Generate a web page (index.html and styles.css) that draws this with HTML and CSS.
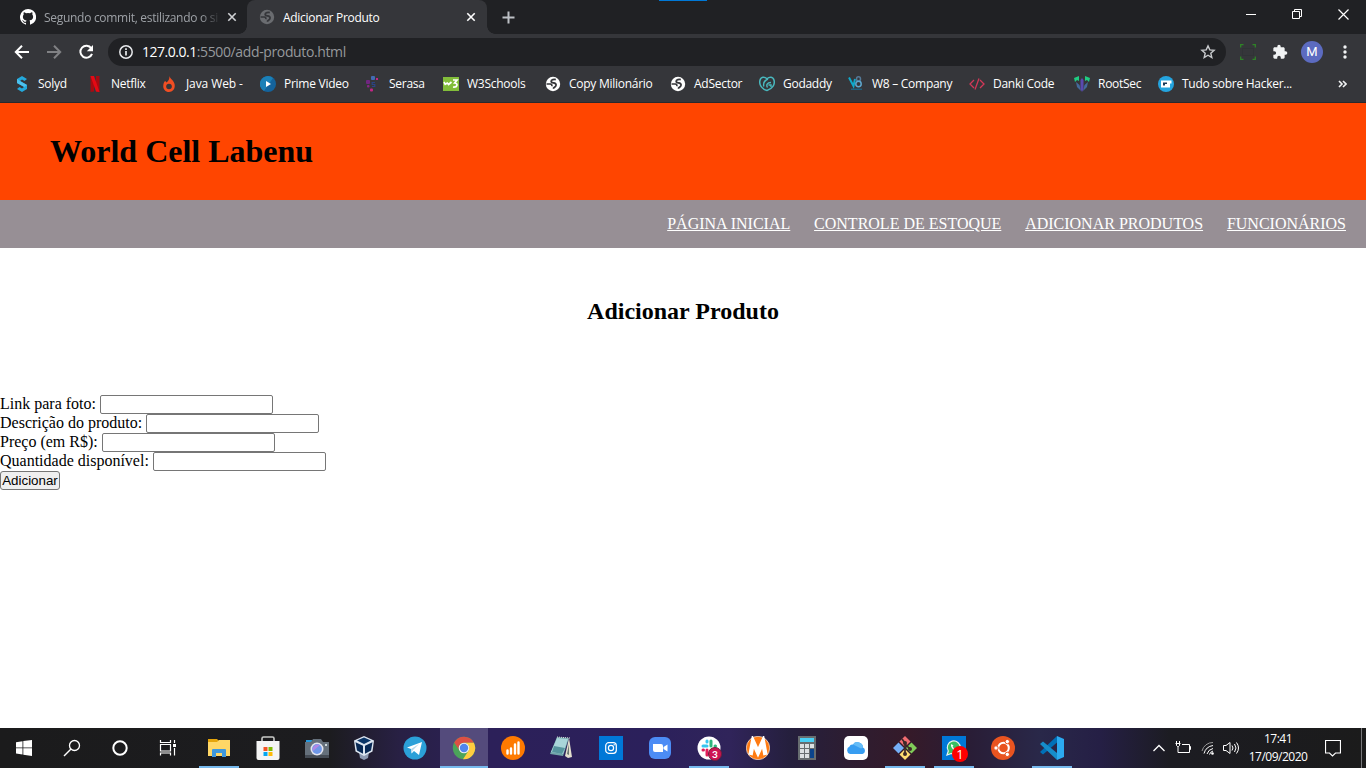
FILE: index.html
```html
<!DOCTYPE html>
<html lang="pt-BR">
<head>
<meta charset="utf-8">
<title>Adicionar Produto</title>
<link rel="stylesheet" href="styles.css">
</head>
<body>
<svg class="defs" width="0" height="0">
  <symbol id="globe" viewBox="0 0 16 16"><circle cx="8" cy="8" r="7.2" fill="currentColor" stroke="none"/><path d="M10.800 3.600C9 3 6.200 3.600 6.200 5.300c0 1.600 1.500 1.500 2.800 1.700 1.700.3 2.500 1.400 1.800 2.900-.6 1.200-1.800 1.400-2.600 2.700" fill="none" stroke-width="1.800"/><path d="M1.500 8h3.800c1.300.2 1.900 1 1.500 2.200" fill="none" stroke-width="1.600"/></symbol>
  <symbol id="x" viewBox="0 0 10 10"><path d="M1.300 1.300l7.400 7.400M8.700 1.300L1.300 8.700" fill="none" stroke="currentColor" stroke-width="1.600"/></symbol>
</svg>
<div class="browser">
  <div class="tabs">
    <div class="tab tab-github">
      <svg width="16" height="16" viewBox="0 0 16 16"><path fill="#fff" d="M8 0a8 8 0 0 0-2.530 15.590c.4.070.550-.170.550-.380v-1.340c-2.230.480-2.700-1.070-2.700-1.070-.360-.930-.890-1.170-.890-1.170-.730-.5.060-.490.060-.490.800.060 1.230.830 1.230.830.710 1.220 1.870.870 2.330.660.070-.520.280-.870.500-1.070-1.770-.2-3.640-.890-3.640-3.950 0-.880.310-1.590.820-2.150-.080-.2-.360-1.020.080-2.120 0 0 .670-.220 2.200.820a7.500 7.500 0 0 1 4 0c1.530-1.040 2.200-.820 2.200-.820.440 1.100.160 1.920.080 2.120.510.560.820 1.270.820 2.150 0 3.070-1.870 3.750-3.650 3.950.290.250.540.730.540 1.480v2.200c0 .210.150.460.550.380A8 8 0 0 0 8 0z"/></svg>
      <span class="tab-title faded">Segundo commit, estilizando o si</span>
      <svg class="tab-x" width="10" height="10"><use href="#x"/></svg>
    </div>
    <div class="tab tab-active">
      <svg class="globe-dim" width="16" height="16"><use href="#globe"/></svg>
      <span class="tab-title">Adicionar Produto</span>
      <svg class="tab-x" width="10" height="10"><use href="#x"/></svg>
    </div>
    <svg class="plus" width="13" height="13" viewBox="0 0 13 13"><path d="M6.500.5v12M.5 6.500h12" stroke="#bdc1c6" stroke-width="2"/></svg>
    <i class="accent"></i>
    <div class="win-buttons">
      <svg width="11" height="11"><path d="M0 5.500h10" stroke="#fff"/></svg>
      <svg width="11" height="11"><path d="M.5 2.500h7v7h-7zM2.500 2V.5h7v7H8" fill="none" stroke="#fff"/></svg>
      <svg width="11" height="11"><path d="M.5.5l10 10M10.500.5l-10 10" stroke="#fff" stroke-width="1.200"/></svg>
    </div>
  </div>
  <div class="toolbar">
    <svg width="16" height="16" viewBox="0 0 16 16"><path d="M15 8H2M8 1.800L1.800 8 8 14.200" fill="none" stroke="#fff" stroke-width="2"/></svg>
    <svg width="16" height="16" viewBox="0 0 16 16"><path d="M1 8h13M8 1.800L14.200 8 8 14.200" fill="none" stroke="#808184" stroke-width="2"/></svg>
    <svg width="16" height="16" viewBox="0 0 16 16"><path d="M13.300 4.300A6 6 0 1 0 14 9.800" fill="none" stroke="#fff" stroke-width="2"/><path d="M15 1v6.200H8.800z" fill="#fff"/></svg>
    <div class="omnibox">
      <svg width="16" height="16" viewBox="0 0 16 16"><circle cx="8" cy="8" r="6.200" fill="none" stroke="#e8eaed" stroke-width="1.500"/><path d="M8 7v4.500M8 4.300v1.600" stroke="#e8eaed" stroke-width="1.700"/></svg>
      <span class="url"><b>127.0.0.1</b>:5500/add-produto.html</span>
      <svg class="star" width="16" height="16" viewBox="0 0 16 16"><path d="M8 1.900l1.800 4 4.300.4-3.300 2.900 1 4.300L8 11.200l-3.800 2.300 1-4.300-3.300-2.900 4.300-.4z" fill="none" stroke="#c8cacd" stroke-width="1.400"/></svg>
    </div>
    <svg class="frame" width="16" height="16" viewBox="0 0 16 16"><path d="M.7 3.500V.7h2.800M12.500.7h2.800v2.800M15.300 12.500v2.800h-2.800M3.500 15.300H.7v-2.800" fill="none" stroke="#2f8427" stroke-width="1.300"/><rect x="2.500" y="4.500" width="11" height="7" fill="none" stroke="#303336"/></svg>
    <svg class="puzzle" width="16" height="16" viewBox="0 0 24 24"><path fill="#f1f3f4" d="M20.500 11H19V7c0-1.100-.9-2-2-2h-4V3.500a2.500 2.500 0 0 0-5 0V5H4c-1.100 0-2 .9-2 2v3.800h1.500a2.700 2.700 0 0 1 0 5.400H2V20c0 1.100.9 2 2 2h3.800v-1.500a2.700 2.700 0 0 1 5.400 0V22H17c1.100 0 2-.9 2-2v-4h1.500a2.500 2.500 0 0 0 0-5z"/></svg>
    <span class="avatar">M</span>
    <svg class="dots" width="4" height="14"><circle cx="2" cy="2" r="1.700"/><circle cx="2" cy="7" r="1.700"/><circle cx="2" cy="12" r="1.700"/></svg>
  </div>
  <div class="bookmarks">
    <span class="bm"><svg viewBox="0 0 16 16"><path d="M8 0l5 3-2.500 2L8 3.500 6 5l7 4v4l-5 3-5-3 2.500-2L8 12.500l2-1.500-7-4V3z" fill="#24a9dc"/><path d="M3 3l3 2 7 4-2.500 2L3 7z" fill="#4cc1ee"/></svg>Solyd</span>
    <span class="bm"><svg viewBox="0 0 16 16"><path d="M3.500 0H7v15.500l-3.500.5zM9 0h3.500v16L9 15.500z" fill="#a60b12"/><path d="M3.500 0H7l5.500 16L9 15.500z" fill="#e50914"/></svg>Netflix</span>
    <span class="bm java"><svg viewBox="0 0 16 16"><path d="M8.500 0c.4 3 4.700 4.400 5.200 8.800C14.200 13 11.500 16 8 16s-6.200-3-5.700-6.800c.2-2 1-3.700 2-4.200l1.100 1.500C7.700 4.800 8.500 3 8.500 0z" fill="#f04e23"/><circle cx="8" cy="10.500" r="2.800" fill="#35363a"/></svg>Java Web -</span>
    <span class="bm"><svg viewBox="0 0 16 16"><circle cx="8" cy="8" r="8" fill="#14639c"/><path d="M1 4a8 8 0 0 1 12-2L4 15A8 8 0 0 1 1 4z" fill="#1b80b7"/><path d="M6 5l5 3-5 3z" fill="#fff"/></svg>Prime Video</span>
    <span class="bm"><svg viewBox="0 0 16 16"><rect x="6" y="0" width="4" height="4" rx="1" fill="#426cb4"/><rect x="1" y="4" width="4" height="4" rx="1" fill="#702681"/><rect x="2" y="9" width="2.500" height="2.500" rx="1" fill="#8b2687"/><rect x="5" y="12.500" width="3" height="3" rx="1" fill="#c42686"/><rect x="11" y="2" width="2" height="2" fill="#c42686"/><path d="M10 6.500H7.200v2h2.600v2H7" fill="none" stroke="#2b4484" stroke-width="1.200"/></svg>Serasa</span>
    <span class="bm"><svg viewBox="0 0 16 16"><rect y="1" width="16" height="14" fill="#82bd3a"/><path d="M1 6l1.200 2.300L4.300 7l1.300 1.500L8.500 6M10 4h4l-2.300 3c3.500 0 3 4.500-1.700 4" fill="none" stroke="#fff" stroke-width="1.700"/></svg>W3Schools</span>
    <span class="bm globe-light"><svg><use href="#globe"/></svg>Copy Milionário</span>
    <span class="bm globe-light"><svg><use href="#globe"/></svg>AdSector</span>
    <span class="bm"><svg viewBox="0 0 16 16"><path d="M8 14.500C2.500 13 0 8.500.9 4.500 1.800.6 5.500.5 8 2.800c2.500-2.300 6.200-2.200 7.100 1.700.9 4-1.600 8.500-7.100 10z" fill="none" stroke="#49b8be" stroke-width="1.500"/><path d="M4.800 10.500C4 7 5.500 4.500 9 3M8.500 11.500C7 9 8 6.500 12 6.500M9.500 9H12v2" fill="none" stroke="#49b8be" stroke-width="1.400"/></svg>Godaddy</span>
    <span class="bm"><svg viewBox="0 0 16 16"><path d="M1 1.500l4.500 8.500L7 3" fill="none" stroke="#10a8c9" stroke-width="2"/><ellipse cx="10.500" cy="3" rx="2" ry="2.200" fill="none" stroke="#557a98" stroke-width="1.500"/><circle cx="10.500" cy="8" r="2.700" fill="none" stroke="#5ea8cf" stroke-width="1.500"/><path d="M3 12.500h11v1.500H3z" fill="#205f7b"/></svg>W8 – Company</span>
    <span class="bm"><svg viewBox="0 0 16 16"><path d="M5 4L1 8l4 4M11 4l4 4-4 4M10 2.500L6 13.500" fill="none" stroke="#d23858" stroke-width="1.300"/></svg>Danki Code</span>
    <span class="bm"><svg viewBox="0 0 16 16"><path d="M0 2l5-2v5L3 4 1 6zM16 2l-5-2v5l2-1 2 2z" fill="#20cc82"/><path d="M2 6l3.500 3 1.500 6-4-4zM14 6l-3.500 3L9 15l4-4z" fill="#446a9b"/><path d="M8 2l1.500 2v9L8 16l-1.500-3V4z" fill="#5a49b0"/></svg>RootSec</span>
    <span class="bm"><svg viewBox="0 0 16 16"><circle cx="8" cy="8" r="8" fill="#24a4df"/><path d="M3 4.500h10.500v3H12v4H3z" fill="#fff"/><path d="M5 6.500h4V8H7v1.500H5z" fill="#183858"/></svg>Tudo sobre Hacker...</span>
    <svg class="more" width="9" height="8"><path d="M1 1l3 3-3 3M5 1l3 3-3 3" fill="none" stroke="#f1f3f4" stroke-width="1.600"/></svg>
  </div>
</div>

<div class="page">
  <header><h1>World Cell Labenu</h1></header>
  <nav>
    <a href="#">PÁGINA INICIAL</a>
    <a href="#">CONTROLE DE ESTOQUE</a>
    <a href="#">ADICIONAR PRODUTOS</a>
    <a href="#">FUNCIONÁRIOS</a>
  </nav>
  <h2>Adicionar Produto</h2>
  <form>
    <label>Link para foto: <input type="text"></label>
    <label>Descrição do produto: <input type="text"></label>
    <label>Preço (em R$): <input type="text"></label>
    <label>Quantidade disponível: <input type="text"></label>
    <button type="button">Adicionar</button>
  </form>
</div>

<div class="taskbar">
  <div class="system">
    <span><svg viewBox="0 0 24 24"><path d="M4 6.200l6.500-1v6.300H4zM11.300 5l8.700-1v7.500h-8.700zM4 12.300h6.500v6.300l-6.500-1zM11.300 12.300H20V20l-8.700-1.200z" fill="#fff"/></svg></span>
    <span><svg viewBox="0 0 24 24"><circle cx="14.500" cy="9.500" r="5" fill="none" stroke="#fff" stroke-width="1.300"/><path d="M11 13l-7 7" stroke="#fff" stroke-width="1.500"/></svg></span>
    <span><svg viewBox="0 0 24 24"><circle cx="12" cy="12" r="6.700" fill="none" stroke="#fff" stroke-width="2"/></svg></span>
    <span><svg viewBox="0 0 24 24"><path d="M4.500 4v2.500h10V4M4.500 19.500V17h10v2.500M4.500 8.500h10v6.500h-10zM18.500 4v3M18.500 12v7.500" fill="none" stroke="#fff" stroke-width="1.200"/><path d="M17 8h3v3h-3z" fill="#fff"/></svg></span>
  </div>
  <div class="apps">
    <span class="open"><svg viewBox="0 0 24 24"><path d="M1 3h9l2 2h11v15H1z" fill="#e5a50b"/><path d="M1 6h9l2-2h11v16H1z" fill="#ffd766"/><path d="M5 14q0-1 1-1h12q1 0 1 1v7h-4v-4H9v4H5z" fill="#3f98dc"/></svg></span>
    <span><svg viewBox="0 0 24 24"><path d="M6 6V2.500Q6 1 7.500 1h9Q18 1 18 2.500V6" fill="none" stroke="#c9cac9" stroke-width="1.600"/><path d="M.5 5h23v17q0 2-2 2h-19q-2 0-2-2z" fill="#f5f5f5"/><path d="M7.500 11h4v4h-4z" fill="#f35325"/><path d="M12.500 11h4v4h-4z" fill="#81bc06"/><path d="M7.500 16h4v4h-4z" fill="#05a6f0"/><path d="M12.500 16h4v4h-4z" fill="#ffba08"/></svg></span>
    <span><svg viewBox="0 0 24 24"><path d="M1 4h6v4H1z" fill="#2497dc"/><path d="M0 6h6l2-3h8l2 3h6v16H0z" fill="#65707b"/><path d="M0 19h24v3H0z" fill="#454c55"/><circle cx="12" cy="13" r="6.500" fill="#e4e5ee"/><circle cx="12" cy="13" r="4.900" fill="#6f98e7"/><path d="M8 15a5 5 0 0 1 7-6z" fill="#b387e5"/><rect x="20" y="8" width="2" height="2" fill="#cdd8dc"/></svg></span>
    <span class="vbox"><svg viewBox="0 0 24 24"><path d="M7 16l1 6 4 2 4-2 1-6z" fill="#8e9bb3"/><path d="M2 4.500L12 0l10 4.500-1.500 11L12 20l-8.500-4.500z" fill="#dce5f0"/><path d="M3.500 6.200l7.500 3.500v8L5 14.500zM20.500 6.200L13 9.700v8l6-3.200z" fill="#082955"/><path d="M5 4.500L12 1.500l7 3-7 3.500z" fill="#0a3567"/></svg></span>
    <span><svg viewBox="0 0 24 24"><circle cx="12" cy="12" r="11.500" fill="#2ba0d8"/><path d="M4 11.500L19 6l-3 13-5-4-2.500 2.500L8 13z" fill="#fff"/><path d="M8 13l8-5-6 6-1.500 3z" fill="#b7d8ea"/></svg></span>
    <span class="open active"><svg viewBox="0 0 24 24"><circle cx="12" cy="12" r="11.200" fill="#4ba45a"/><path d="M2.200 6.500A11.200 11.200 0 0 1 21.800 6.700H12a5.300 5.300 0 0 0-4.800 7.600z" fill="#dd5044"/><path d="M12 6.700h9.800A11.200 11.200 0 0 1 11 23.200l5.500-8.500A5.300 5.300 0 0 0 12 6.700z" fill="#ffcd40"/><circle cx="12" cy="12" r="5.300" fill="#f1f1f1"/><circle cx="12" cy="12" r="4.200" fill="#5086ec"/></svg></span>
    <span><svg viewBox="0 0 24 24"><circle cx="12" cy="12" r="12" fill="#ff7a00"/><path d="M6.500 14.500v3M10 12.500v5M14 8.500v9M17.500 6.500v11" stroke="#fff" stroke-width="2.400" stroke-linecap="round"/></svg></span>
    <span class="notepad"><svg viewBox="0 0 24 24"><path d="M8 1l12 1-6 18-13-2z" fill="#72a4a9"/><path d="M8 2l11 1-5 15-12-2z" fill="#a9d5d9"/><path d="M5 10l11 2-3 6-10-2z" fill="#57959e"/><path d="M20 2l3 19-4 1-3-2z" fill="#e3dfce"/><path d="M20 8l-2 10 2 1z" fill="#697570"/><path d="M8 1l13 1" stroke="#ddd" stroke-dasharray="1 1"/></svg></span>
    <span><svg viewBox="0 0 24 24"><path d="M0 0h24v24H0z" fill="#0078d7"/><rect x="6.700" y="6.700" width="10.600" height="10.600" rx="3" fill="none" stroke="#fff" stroke-width="1.200"/><circle cx="12" cy="12" r="2.600" fill="none" stroke="#fff" stroke-width="1.200"/><circle cx="15.200" cy="8.800" r=".7" fill="#fff"/></svg></span>
    <span><svg viewBox="0 0 24 24"><rect x="1" y="1" width="22" height="22" rx="6" fill="#4c8cf5"/><path d="M5 8h8q2 0 2 2v6H7q-2 0-2-2zM15.500 11l4-2.500v7l-4-2.500z" fill="#fff"/></svg></span>
    <span class="open"><svg viewBox="0 0 24 24"><circle cx="12" cy="12" r="11.500" fill="#fff"/><g fill="none" stroke-width="3" stroke-linecap="round"><path d="M6 10h4M10 5v1" stroke="#36c5f0"/><path d="M14 5v5M18 10h.5" stroke="#2eb67d"/><path d="M10 14v5M6 14h.5" stroke="#e01e5a"/><path d="M14 14h4" stroke="#ecb22e"/></g></svg><em class="slack-badge">3</em></span>
    <span><svg viewBox="0 0 24 24"><circle cx="12" cy="12" r="11.700" fill="#ff7b12" stroke="#fff" stroke-width=".6"/><path d="M4.500 19L7 5.500l5 11 5-11L19.500 19" fill="none" stroke="#fff" stroke-width="4.400"/></svg></span>
    <span><svg viewBox="0 0 24 24"><path d="M3 0h18v24H3z" fill="#676d70"/><path d="M5 2h14v4H5z" fill="#49cff5"/><path d="M5 8h4v4H5zM10 8h4v4h-4zM15 8h4v4h-4zM5 13h4v4H5zM10 13h4v4h-4zM5 18h4v4H5zM10 18h4v4h-4z" fill="#dbe0e2"/><path d="M15 13h4v9h-4z" fill="#0b448c"/></svg></span>
    <span><svg viewBox="0 0 24 24"><rect width="24" height="24" rx="5" fill="#fff"/><path d="M6 18a4 4 0 0 1-.5-7.500 3 3 0 0 1 3.500-2 5.500 5.500 0 0 1 10 3A3.500 3.500 0 0 1 18.500 18z" fill="#379df1"/><path d="M9 8.500a5.500 5.500 0 0 1 10 3l-2 1z" fill="#65bcf7"/></svg></span>
    <span class="open"><svg viewBox="0 0 24 24"><path d="M12 0l5.500 5.500L12 11 6.500 5.500z" fill="#f16c70"/><path d="M5.500 6.500L11 12l-5.500 5.500L0 12z" fill="#75aff7"/><path d="M18.500 6.500L24 12l-5.500 5.500L13 12z" fill="#80cc59"/><path d="M12 13l5.500 5.500L12 24l-5.500-5.500z" fill="#ffdd70"/><path d="M9 3l3 4v11M12 8l5 5" fill="none" stroke="#3d2927" stroke-width="1.700"/><g fill="#3d2927"><circle cx="12" cy="7" r="2"/><circle cx="17" cy="13" r="2"/><circle cx="12" cy="18" r="2"/></g></svg></span>
    <span class="open"><svg viewBox="0 0 24 24"><path d="M0 0h24v24H0z" fill="#0078d7"/><path d="M5 19l1.300-4a6.500 6.500 0 1 1 3 2.500z" fill="#38bf62" stroke="#e8f5ec" stroke-width="1.200"/><path d="M9.500 8c-2 2 2 7 5 7l1-2-2-1-1 .7-2-2 1-1z" fill="#fff"/></svg><em class="wa-badge">1</em></span>
    <span><svg viewBox="0 0 24 24"><circle cx="12" cy="12" r="12" fill="#e95420"/><circle cx="12.500" cy="12" r="5.300" fill="none" stroke="#fff" stroke-width="2"/><g fill="#fff" stroke="#e95420"><circle cx="5" cy="12" r="2.200"/><circle cx="16.300" cy="5.600" r="2.200"/><circle cx="16.300" cy="18.400" r="2.200"/></g></svg></span>
    <span class="open"><svg viewBox="0 0 24 24"><path d="M17 0v6.500L3 18.500 0 16z" fill="#0070b8"/><path d="M0 8l3-2.500L17 17v7z" fill="#168dcb"/><path d="M17 0l7 3v18l-7 3z" fill="#2caaf0"/></svg></span>
  </div>
  <div class="tray">
    <svg class="chevron" width="14" height="24"><path d="M1.500 15L7 9.500l5.500 5.500" fill="none" stroke="#fff" stroke-width="1.300"/></svg>
    <svg class="battery" width="16" height="24"><path d="M7 8.500h7.500v8H4M14.500 10.500h1v3h-1M1.500 5v2M4.500 5v2M.5 7.500h5M1.500 7.500v2l1 1h1l1-1v-2M3 10.500v6h2" fill="none" stroke="#fff"/></svg>
    <svg class="wifi" width="14" height="24"><g fill="none"><path d="M1 15A11 11 0 0 1 12 6.500" stroke="#999"/><path d="M3 17.500A11 11 0 0 1 12 9.500M6 18A8 8 0 0 1 12 12.500M8.500 18.500a5 5 0 0 1 3.500-3.500" stroke="#fff"/></g><circle cx="11.500" cy="17.500" r="1.300" fill="#fff"/></svg>
    <svg class="volume" width="17" height="24"><path d="M.5 9.500h2.500L7 6.500v11L3 14.500H.5zM9 9.500q2 2.500 0 5M11.500 8q3 4 0 8M13.500 6.500q4 5.500 0 11" fill="none" stroke="#fff"/></svg>
    <div class="clock"><span>17:41</span><span>17/09/2020</span></div>
    <svg width="16" height="24"><path d="M.5 4.500h15v12.500h-5l-3 3-3-3h-4z" fill="none" stroke="#fff" stroke-width="1.200"/></svg>
    <i class="desktop-edge"></i>
  </div>
</div>
</body>
</html>
```
FILE: styles.css
```css
* { box-sizing: border-box; }
body { margin: 0; width: 1366px; height: 768px; overflow: hidden; display: flex; flex-direction: column; background: #fff; font-family: "Liberation Serif", serif; }
svg { display: block; flex: none; }
.defs { position: absolute; }

.browser { height: 103px; flex: none; background: #35363a; border-bottom: 1px solid #29292c; font-family: "Open Sans", "Noto Sans", sans-serif; color: #fff; }
.tabs { height: 34px; display: flex; align-items: center; background: #202124; position: relative; }
.tab { display: flex; align-items: center; height: 34px; font-size: 12px; }
.tab-github { width: 247px; padding: 0 10px 0 20px; color: #9da1a6; }
.tab-active { width: 240px; padding: 0 11px 0 12px; background: #35363a; border-radius: 8px 8px 0 0; color: #fff; position: relative; }
.tab-active::before, .tab-active::after { content: ""; position: absolute; bottom: 0; width: 8px; height: 8px; }
.tab-active::before { left: -8px; background: radial-gradient(circle at 0 0, #202124 7.5px, #35363a 8px); }
.tab-active::after { right: -8px; background: radial-gradient(circle at 100% 0, #202124 7.5px, #35363a 8px); }
.tab-title { margin-left: 8px; letter-spacing: -.3px; white-space: nowrap; }
.faded { letter-spacing: -.29px; -webkit-mask-image: linear-gradient(90deg, #000 90%, rgba(0,0,0,.15)); mask-image: linear-gradient(90deg, #000 90%, rgba(0,0,0,.15)); }
.tab-x { margin-left: auto; color: #d0d2d5; }
.tab-active .tab-x { color: #fff; }
.globe-dim { color: #6a6c70; stroke: #35363a; }
.plus { margin-left: 15px; }
.accent { position: absolute; left: 659px; top: 0; width: 48px; height: 1px; background: #0078d7; }
.win-buttons { margin-left: auto; display: flex; gap: 35px; padding: 0 17px 6px 0; }

.toolbar { height: 36px; display: flex; align-items: center; padding-left: 14px; }
.toolbar > svg + svg { margin-left: 16px; }
.omnibox { width: 1118px; height: 28px; margin-left: 14px; border-radius: 14px; background: #202124; display: flex; align-items: center; padding: 0 10px; }
.url { margin-left: 8px; font-size: 14px; line-height: 18px; padding-bottom: 1px; color: #96999c; letter-spacing: -.37px; }
.url b { font-weight: 400; color: #fff; letter-spacing: -.48px; }
.star { margin-left: auto; }
.frame { margin-left: 14px; }
.avatar { width: 22px; height: 22px; margin-left: 13px; border-radius: 50%; background: #5c6bc0; font: 13px/22px Roboto, sans-serif; text-align: center; }
.dots { margin-left: 20px; fill: #f1f3f4; }

.bookmarks { height: 27px; display: grid; grid-template-columns: 73px 74px 99px 105px 78px 102px 125px 89px 89px 121px 105px 84px 180px 9px; align-items: center; padding-left: 14px; }
.bm { display: flex; align-items: center; gap: 8px; font-size: 12px; letter-spacing: -.27px; white-space: nowrap; }
.java { gap: 9px; letter-spacing: -.1px; }
.bm svg { width: 16px; height: 16px; }
.globe-light svg { stroke: #35363a; }

.page { flex: 1; }
header { height: 97px; padding-left: 50px; display: flex; align-items: center; background: orangered; }
h1 { margin: 0; font-size: 32px; line-height: 37px; }
nav { height: 48px; display: flex; justify-content: flex-end; align-items: center; gap: 23.8px; padding-right: 20px; background: #978f95; font-size: 16px; }
nav a { color: #fff; }
h2 { margin: 50px 0 70px; font-size: 24px; line-height: 27px; text-align: center; }
form { display: flex; flex-direction: column; align-items: flex-start; font-size: 16px; }
label { display: flex; gap: 4px; height: 19px; line-height: 18px; white-space: nowrap; }
input { width: 173px; height: 19px; margin: 0; padding: 0; border: 1px solid #767676; border-radius: 2px; background: #fff; }
button { width: 60px; height: 19px; padding: 0; border: 1px solid #767676; border-radius: 3px; background: #efefef; font: 13.333px/17px "Liberation Sans", Arial, sans-serif; color: #000; }

.taskbar { height: 40px; flex: none; display: flex; background: linear-gradient(90deg, #1b1b1c 0, #1c1c1f 330px, #282044 400px, #2c2059 490px, #2b205b 650px, #30245a 730px, #251f3d 790px, #2d1d31 850px, #351a29 910px, #291d36 970px, #292849 1040px, #251f45 1100px, #1c1c22 1170px, #1b1b1b 1366px); }
.system { display: flex; width: 195px; }
.system span, .apps span { width: 48px; height: 40px; display: flex; align-items: center; justify-content: center; position: relative; }
.system svg, .apps svg { width: 24px; height: 24px; }
.apps { display: flex; gap: 1px; }
.apps .vbox { padding-right: 4px; }
.apps .notepad { padding-right: 2px; }
.open::after { content: ""; position: absolute; left: 4px; right: 4px; bottom: 0; height: 2px; background: #76b9ed; }
.active { background: #544b7c; }
.active::after { left: 0; right: 0; }
.slack-badge, .wa-badge { position: absolute; border-radius: 50%; color: #fff; font-style: normal; text-align: center; }
.slack-badge { left: 23px; top: 19px; width: 14px; height: 14px; background: #cd1452; border: 1px solid #701d3c; font: bold 10px/12px Lato, sans-serif; }
.wa-badge { left: 22px; top: 18px; width: 16px; height: 16px; background: #f00; font: 13px/16px "Open Sans", sans-serif; }
.tray { margin-left: auto; display: flex; align-items: center; color: #fff; }
.chevron { margin-right: 9px; }
.battery { margin-right: 10px; }
.wifi { margin-right: 8px; }
.volume { margin-right: 9px; }
.clock { width: 58px; height: 40px; display: flex; flex-direction: column; align-items: center; font: 12px/18px "Open Sans", sans-serif; letter-spacing: -.5px; white-space: nowrap; padding-top: 2px; margin-right: 18px; }
.clock + svg { margin-right: 20px; }
.desktop-edge { width: 1px; height: 40px; background: #77777a; margin-right: 4px; }
```
